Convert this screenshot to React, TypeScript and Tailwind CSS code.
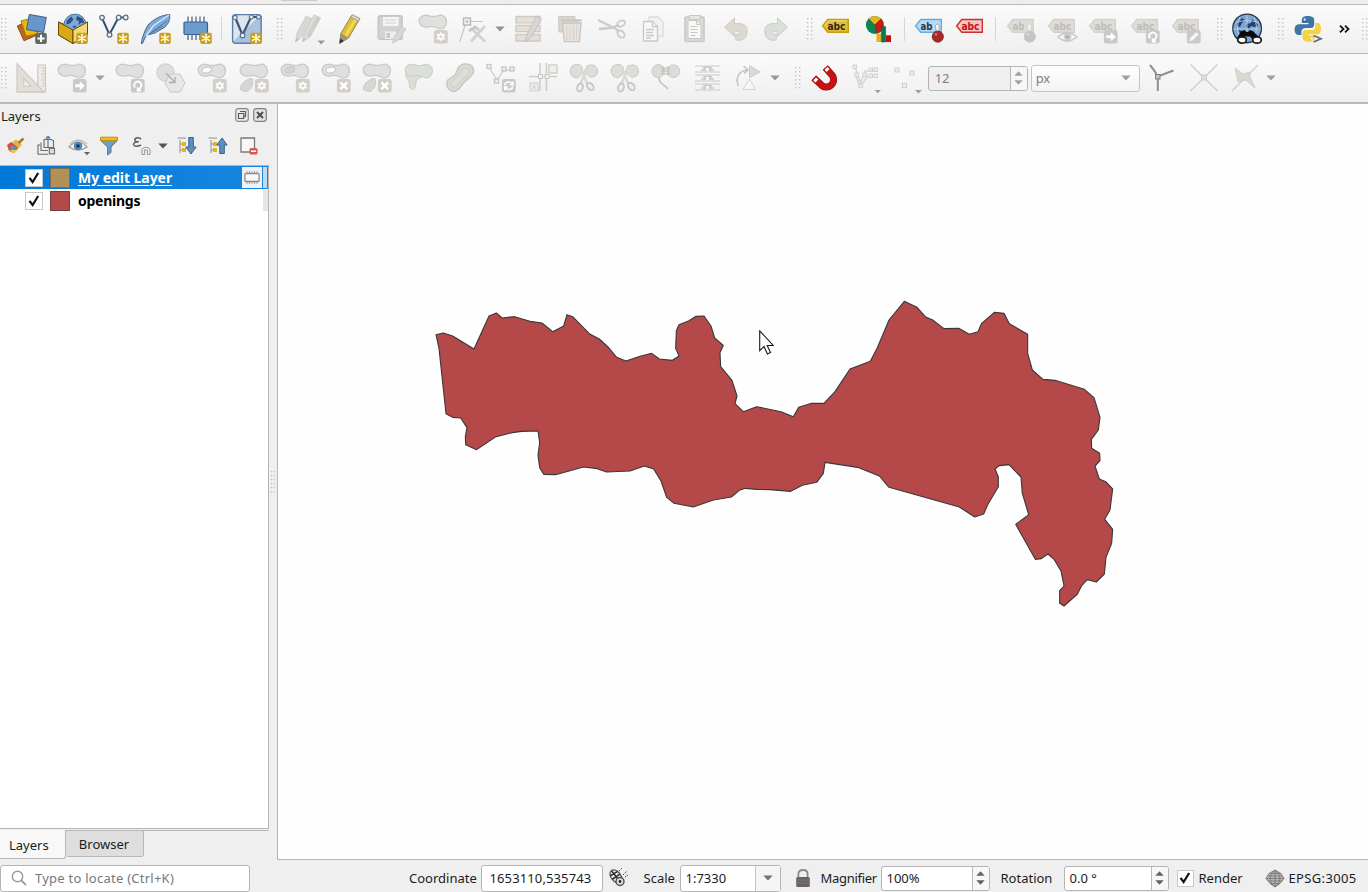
import React from "react";

type Kids = { children?: React.ReactNode };

/* ---------- toolbar primitives ---------- */

function Tool({ children }: Kids) {
  return (
    <div className="flex h-full w-[41.3px] shrink-0 items-center justify-center">
      <svg width="30" height="30" viewBox="0 0 30 30" className="overflow-visible">
        {children}
      </svg>
    </div>
  );
}

function Grip() {
  return (
    <svg width="6" height="22" viewBox="0 0 6 22" className="shrink-0">
      {[0, 1, 2, 3, 4, 5].map((i) => (
        <g key={i} fill="#c2c2c2">
          <rect x="0" y={i * 4} width="1.4" height="1.4" />
          <rect x="4" y={i * 4} width="1.4" height="1.4" />
        </g>
      ))}
    </svg>
  );
}

function Rule() {
  return <div className="h-6 w-px shrink-0 bg-[#d6d6d6]" />;
}

function Caret({ fill = "#929292" }: { fill?: string }) {
  return (
    <svg width="10" height="6" viewBox="0 0 10 6" className="shrink-0">
      <path d="M0.3 0.5H9.7L5 5.6Z" fill={fill} />
    </svg>
  );
}

function Badge({ kind, tone = "gray" }: { kind: "star" | "plus" | "arrow" | "turn" | "x" | "sync" | "pen"; tone?: "gray" | "gold" | "dark" | "warm" }) {
  const fill = { gray: "#c9c9c9", gold: "#c9a01a", dark: "#5f6b60", warm: "#d2cec8" }[tone];
  const strong = tone === "gold" || tone === "dark";
  return (
    <g transform={strong ? "translate(18.2 18.8)" : "translate(15.9 16) scale(1.19 1.21)"}>
      <rect width="11.6" height="11.2" rx="2" fill={fill} />
      {kind === "star" && strong && <path d="M5.8 1.6V9.6M2.3 3.6L9.3 7.6M9.3 3.6L2.3 7.6" stroke="#fff8dc" strokeWidth="1.6" strokeLinecap="round" />}
      {kind === "star" && !strong && (
        <>
          <path d="M5.8 1.4L7.2 3.4L9.6 3.4L8.5 5.6L9.6 7.8L7.2 7.8L5.8 9.8L4.4 7.8L2 7.8L3.1 5.6L2 3.4L4.4 3.4Z" fill="#fafafa" />
          <circle cx="5.8" cy="5.6" r="1.1" fill={fill} />
        </>
      )}
      {kind === "plus" && <path d="M5.8 2V9.2M2.2 5.6H9.4" stroke="#fff" strokeWidth="2" />}
      {kind === "arrow" && <path d="M2 4.3H5.8V1.8L10 5.6L5.8 9.4V6.9H2Z" fill="#fff" />}
      {kind === "turn" && <path d="M3.4 7A3 3 0 1 1 8.4 6.6L6.2 9.3M5.7 6.8V9.6H8.6" fill="none" stroke="#fff" strokeWidth="1.5" />}
      {kind === "x" && <path d="M3 2.8L8.6 8.4M8.6 2.8L3 8.4" stroke="#fff" strokeWidth="2.2" />}
      {kind === "sync" && <path d="M2.4 5.2C3 2 7.5 1.6 8.8 4.4M9.3 2V4.8H6.6M9.2 6.2C8.5 9.2 4.2 9.6 2.8 6.9M2.3 9.3V6.6H5" fill="none" stroke="#fff" strokeWidth="1.3" />}
      {kind === "pen" && <path d="M2 9.3L3 6.4L7.9 1.8L9.9 3.6L5 8.4Z" fill="#f6f6f6" />}
    </g>
  );
}

const BLOB = "M1.2 7.5C.6 3.5 4.8.6 9.2 1.4C13 2.4 16 3.4 19.5 1.8C24.6-.2 29 3.6 28.4 8.4C28.2 12 25.8 15.8 20.8 14.6C17.2 13.4 15.6 11.4 11.6 12.6C6.4 14.2 1.8 12.2 1.2 7.5Z";
function Blob({ hole }: { hole?: "white" | "gray" }) {
  return (
    <g stroke="#c9c9c7" strokeWidth="1.3">
      <path d={BLOB} fill="#dfe1de" />
      {hole && <ellipse cx="9.8" cy="7" rx="5" ry="3" transform="rotate(-12 9.8 7)" fill={hole === "white" ? "#fcfcfc" : "#d3d6d2"} />}
    </g>
  );
}
const Part = () => <path d="M1.5 26.5C1.5 20 7 16 13 15.5C15 21 12 27 8 28.4C5.5 28.6 3 27.6 1.5 26.5Z" fill="#d5d7d3" stroke="#c9c9c7" />;

/* ---------- data source icons ---------- */

const AddLayers = () => (
  <>
    <path d="M.3 12L11 7L20 21L7 26.8Z" fill="#bb6522" stroke="#934b14" />
    <path d="M4 7L16 4L21 20L9 22Z" fill="#ecb90e" stroke="#a3790b" />
    <path d="M12.3.5L29.3 3.5L26.5 18.5L9.5 15.5Z" fill="#6697c8" stroke="#385f8c" />
    <Badge kind="plus" tone="dark" />
  </>
);
const GeoPackage = () => (
  <>
    <path d="M.5 8L15 14L29.5 8V21L15 29.5L.5 21Z" fill="#d9aa14" stroke="#654b12" />
    <circle cx="17" cy="11.3" r="11.2" fill="#7daada" stroke="#4f76a3" />
    <path d="M8.5 7L13 2.5L15.5 5.5L12 9.5L8.5 10.5ZM19 2L24.5 4.5L26.5 9.5L23.5 8.5L20.5 11L21 7.5L18 5.5ZM14 12.5L18 11.5L17.5 14.5Z" fill="#2f5180" />
    <path d="M.5 8L15 16L15 29.5L.5 21Z" fill="#d9aa14" stroke="#654b12" />
    <path d="M15 16L29.5 8V21L15 29.5Z" fill="#f3d975" stroke="#654b12" />
    <Badge kind="star" tone="gold" />
  </>
);
const Vertices = () => (
  <>
    <path d="M3 4L10.4 20.5L19.5 3.5H27" fill="none" stroke="#37506f" strokeWidth="2" />
    <g fill="#f3f7fb" stroke="#5e6f7f" strokeWidth="1.3">
      <circle cx="3" cy="3.6" r="2.3" /><circle cx="10.5" cy="20.8" r="2.3" />
      <circle cx="19.6" cy="3.5" r="2.3" /><circle cx="26.7" cy="3.5" r="2.3" />
    </g>
    <Badge kind="star" tone="gold" />
  </>
);
const Feather = () => (
  <>
    <path d="M.3 29.5C1 24 3 18 7 11C13 5 20 1 28.8.5C29 7 27 10 24 13L14 19L6 21C4 23 3 26 1.5 29.5Z" fill="#7faad8" stroke="#416994" />
    <path d="M5 22L12 12L28 1" stroke="#d3e5f8" strokeWidth="1.5" fill="none" />
    <path d="M8 20L22 12M11 18L26 7" stroke="#416994" strokeWidth=".8" />
    <Badge kind="star" tone="gold" />
  </>
);
const MemoryChip = () => (
  <>
    <path d="M6 2.5V26M10 2.5V26M14 2.5V26M18 2.5V26M22 2.5V26" stroke="#435b7c" strokeWidth="1.2" />
    <rect x="2" y="8" width="23.5" height="12.5" rx="1.2" fill="#6c9bce" stroke="#395f93" strokeWidth="1.2" />
    <Badge kind="star" tone="gold" />
  </>
);
const VirtualLayer = () => (
  <>
    <rect x=".6" y=".6" width="28.6" height="28.6" rx="3" fill="#a9c3df" stroke="#5b7ea9" strokeWidth="1.4" />
    <path d="M1.5 1.5H28L1.5 27Z" fill="#dce6ee" />
    <path d="M3 3L10.5 21L19 3H27" fill="none" stroke="#3d5674" strokeWidth="2.2" />
    <g fill="#eef3f7" stroke="#5b7189" strokeWidth="1.2">
      <circle cx="3" cy="3.4" r="2.1" /><circle cx="10.6" cy="21.5" r="2.3" />
      <circle cx="19.4" cy="3" r="2" /><circle cx="26.6" cy="3" r="2" />
    </g>
    <Badge kind="star" tone="gold" />
  </>
);

/* ---------- digitizing icons ---------- */

const CurrentEdits = () => (
  <>
    <g stroke="#cbcbc9" strokeWidth=".8">
      <path d="M1.5 28L3 19L12 2L18 4.6L9 22Z" fill="#d6d6d3" />
      <path d="M8.5 28L10.5 19L20 .8L26.5 4L16 22.8Z" fill="#dedcd8" />
      <path d="M16 22.8L26.5 4L23.4 2.4L13 20.8Z" fill="#cfcfcc" />
    </g>
    <path d="M1.5 28L2.3 24L5 25.4ZM8.5 28L9.4 24L12 25.6Z" fill="#bdbdbb" />
    <path d="M23.5 26.5H31L27.2 30.5Z" fill="#9a9a9a" />
  </>
);
const Pencil = () => (
  <>
    <path d="M4.6 29.5L5.8 19.5L17 .9L24.8 4.6L13.5 24Z" fill="#e2bd36" stroke="#8d7a35" strokeWidth=".9" />
    <path d="M12.5 21.8L23 4L20.5 2.8L9.5 20.7Z" fill="#f3d75a" />
    <path d="M15.8 3L17 .7L24.9 4.5L23.5 7Z" fill="#dadada" stroke="#969696" strokeWidth=".8" />
    <path d="M5.8 19.5L13.5 24L4.6 29.5Z" fill="#9a948d" />
    <path d="M5.2 24.5L8.8 27L4.6 29.5Z" fill="#333" />
  </>
);
const SaveEdits = () => (
  <>
    <rect x="1.2" y="1.8" width="24" height="23.6" rx="2" fill="#d2d2d2" stroke="#c4c4c4" strokeWidth="1.4" />
    <path d="M6 3H21.5V12H6Z" fill="#f5f5f5" /><path d="M8 6H19M8 9H19" stroke="#cfcfcf" />
    <path d="M8 17.5H19V25H8Z" fill="#eee" /><path d="M9.5 19H13V24H9.5Z" fill="#c8c8c8" />
    <path d="M15.5 29.2L17 23L24.5 12.3L29 15L21.8 26Z" fill="#dad6cf" stroke="#c6c6c3" strokeWidth=".8" />
  </>
);
const AddPolygon = () => (<><Blob /><Badge kind="star" tone="warm" /></>);
const VertexTool = () => (
  <>
    <path d="M1 27.5L7 8M11 7.5H24" stroke="#c6c6c4" strokeWidth="1.2" />
    <rect x="4.5" y="4" width="7" height="7" fill="#eee" stroke="#b8b8b8" strokeWidth="1.4" /><circle cx="8" cy="7.5" r="1.3" fill="#bbb" />
    <path d="M12 14L26 27.5M26 12L12 27.5" stroke="#d3d2ce" strokeWidth="2.8" /><path d="M10 17L16 13L20 16" stroke="#c9c9c7" strokeWidth="2.8" fill="none" />
  </>
);
const MultiEdit = () => (
  <>
    <g fill="#e6dfd4" stroke="#cdc9c3" strokeWidth="1.3"><path d="M2 2.5H26V8.8H2ZM2 11.5H26V17.6H2ZM2 20.5H26V27H2Z" /></g>
    <path d="M11 28L13 20L22.5 2L27.5 4.8L17.5 23Z" fill="#d5d6d3" stroke="#bebfbc" strokeWidth=".9" />
  </>
);
const Trash = () => (
  <>
    <path d="M2.5 2.5H19V6H22V18H3Z" fill="#d9d5cf" stroke="#cbcac7" />
    <path d="M6.5 9H25L23.4 27.6H8.3Z" fill="#e6e3de" stroke="#c9c7c3" strokeWidth="1.4" />
    <path d="M10.5 11L11.3 26M14 11V26M17.5 11V26M21 11L20.4 26" stroke="#e0cec9" /><path d="M5 6.3H26" stroke="#c8c7c4" strokeWidth="2" />
  </>
);
const Scissors = () => (
  <g fill="none" stroke="#cccbc8">
    <path d="M1 6L19 15L22 18M2 15L14 14L22 11" strokeWidth="2.3" />
    <ellipse cx="24" cy="9.6" rx="4.2" ry="2.8" transform="rotate(-30 24 9.6)" strokeWidth="1.8" /><ellipse cx="24" cy="20" rx="4.1" ry="2.9" transform="rotate(45 24 20)" strokeWidth="1.8" />
  </g>
);
const Copy = () => (
  <g fill="#f7f7f7" stroke="#c9c9c9" strokeWidth="1.3">
    <path d="M11 3H20L25 8V22H11Z" fill="#f2f2f2" stroke="#dbdbdb" /><path d="M5.5 7.5H14.5L19.5 12.5V27H5.5Z" /><path d="M14.5 8V12.5H19M8 15.5H16M8 18.5H15M8 21.5H16M8 24H13" />
  </g>
);
const Paste = () => (
  <g stroke="#c8c8c6">
    <rect x="5" y="3" width="19" height="24.5" rx="1" fill="#dcdad5" strokeWidth="1.6" />
    <path d="M8 6.5H16.5L21 10.5V24.5H8Z" fill="#f8f8f8" /><path d="M10.5 12.5H17.5M10.5 15.5H17.5M10.5 18.5H17.5M10.5 21.5H15.5M16.5 7V10.5H20.5" fill="none" />
    <rect x="9.5" y="1.5" width="11" height="4" fill="#e5e5e2" />
  </g>
);
const ARROW = "M3.5 13.2L13.5 4V9.5H17.5C24 9.5 27 13 26 19C25 25 21 27 14.8 26V20C18.5 21 20.2 18 17 17.2H13.5V22.5Z";
const Undo = () => <path d={ARROW} fill="#ddd9d0" stroke="#cecbc4" />;
const Redo = () => <g transform="matrix(-1 0 0 1 29 0)"><path d={ARROW} fill="#dbdfda" stroke="#c9ccc8" /></g>;

/* ---------- label icons ---------- */

function Tag({ fill, stroke, ink, text = "abc", light }: { fill: string; stroke: string; ink: string; text?: string; light?: boolean }) {
  return (
    <>
      <path d="M1.6 12L6.8 5.5H27.3V18.2H6.8Z" fill={fill} stroke={stroke} strokeWidth="1.4" />
      {light && <path d="M3.5 12L7.5 6.8H26" fill="none" stroke="#f6de7c" />}
      <text x="6.4" y="15.6" fontSize="10.5" fontWeight="700" fill={ink} className="font-['DejaVu_Sans',sans-serif]" textLength={text === "abc" ? 18 : 12} lengthAdjust="spacingAndGlyphs">{text}</text>
    </>
  );
}
const Diagram = () => (
  <g transform="translate(1 0)">
    <circle cx="10.8" cy="11" r="8.9" fill="#098457" /><path d="M10.8 11L4.3 4.8A9 9 0 0 1 17.3 4.8Z" fill="#e4b51f" /><path d="M10.8 11L17.3 4.8A9 9 0 0 1 13 19.6Z" fill="#cb1818" />
    <path d="M10.8 11L4.5 4.8M10.8 11L17.3 4.8M10.8 11L13 19.6" stroke="#454533" strokeWidth=".7" />
    <path d="M12.4 19.5H17V28H12.4Z" fill="#e7b520" /><path d="M17.4 12.6H21.6V28H17.4Z" fill="#09774f" stroke="#0b5c3e" strokeWidth=".6" /><path d="M22 21.3H27V28H22Z" fill="#bd1111" />
  </g>
);
function Pin({ muted }: { muted?: boolean }) {
  return <><path d="M22.3 18L21.3 12C22 9.5 24.7 9.5 25.3 12L24.8 18" fill="#f4f4f4" stroke={muted ? "#ccc" : "#8b9aa8"} strokeWidth=".8" /><circle cx="23.8" cy="22.6" r="5.6" fill={muted ? "#c5c4c3" : "#a92828"} stroke={muted ? "#c2c1c0" : "#7f1b1b"} strokeWidth=".8" /><circle cx="22" cy="20.4" r="1.4" fill={muted ? "#d8d8d8" : "#d26d6d"} /></>;
}
const MutedTag = ({ text }: { text?: string }) => <Tag fill="#dfdcd6" stroke="#d4d2cd" ink="#bcbcb9" text={text} />;
const Eye = () => <><path d="M11 23Q20 14.5 30 23Q20 31 11 23Z" fill="#f4f4f4" stroke="#c6c6c6" strokeWidth="1.4" /><circle cx="20.5" cy="22.8" r="3.7" fill="#c9c9c9" /><circle cx="20.5" cy="22.8" r="1.5" fill="#aaa" /></>;

const GlobeSearch = () => (
  <>
    <circle cx="15.1" cy="14.4" r="14.3" fill="#7da6d4" stroke="#24374f" strokeWidth="1.4" />
    <path d="M5 9L10 4L13 6L10 9L8 13L5 12ZM15 10L19 9L20 5L25 9L26 12L22 13L19 12L17 15L14 13ZM6 16L11 17L9 21Z" fill="#23446e" />
    <path d="M3 9Q15 4 27 9M1 15H29M15 1V18M8 3Q3 14 8 24M22 3Q27 14 22 24" stroke="#b5cfea" strokeWidth=".9" fill="none" />
    <path d="M9 17.5L12.5 16L14.5 18H16L18 16L21.5 17.5L28.8 25L22 27L18 22.5H13L9 27L5 24Z" fill="#090909" />
    <ellipse cx="10" cy="26" rx="4.3" ry="3.2" fill="#fff" stroke="#171717" strokeWidth="1.7" /><ellipse cx="25" cy="26" rx="4.3" ry="3.2" fill="#fff" stroke="#171717" strokeWidth="1.7" />
  </>
);
const Python = () => (
  <>
    <path d="M14.6 2C9.5 2 8.8 4.2 8.8 6.6V9H15.5V10.2H5.7C2.7 10.2 1.6 13.2 1.6 15.5C1.6 18.8 3 21 6 21H8.4V18C8.4 15.3 10.2 14 12.8 14H18C20.5 14 21.2 12 21.2 10V6C21.2 3 18.4 2 14.6 2Z" fill="#3d75a6" />
    <path d="M22.3 8.9V12.4C22.3 15 20.4 16 17.7 16H13C10.5 16 9.5 17.4 9.5 19.4V23.5C9.5 26.3 12 27.7 15.6 27.7C19 27.7 21.5 26.3 21.5 23.5V21.5H15.5V20.2H24.7C27.2 20.2 28 17.5 28 14.5C28 11.6 27.2 8.9 24.7 8.9Z" fill="#f4d246" />
    <circle cx="11.7" cy="5.5" r="1.1" fill="#fff" /><circle cx="18.7" cy="24.5" r="1" fill="#fff" /><path d="M20.5 21.5L28 24.8L20.5 28" fill="none" stroke="#666" strokeWidth="1.7" />
  </>
);

/* ---------- advanced digitizing icons ---------- */

const Ruler = () => (
  <g stroke="#ccc8c2" strokeWidth="1.2">
    <path d="M21.8 2H29.5V29H21.8Z" fill="#eeeae5" /><path d="M25 5H29M26 8H29M25 11H29M26 14H29M25 17H29M26 20H29M25 23H29" />
    <path d="M1 .7L28 29.2H1ZM7.8 15.5V23H15Z" fill="#e1ded8" fillRule="evenodd" />
  </g>
);
const Simplify = () => (<><circle cx="9.5" cy="9.5" r="8.7" fill="#dedfdc" stroke="#ccc" /><path d="M14 11H24L29 20L24 29H14L9 20Z" fill="#e4e8e8" stroke="#c7caca" /><path d="M10 10L18.5 19M19 14V19.5H13" stroke="#aeb0ad" fill="none" strokeWidth="1.3" /></>);
const Reshape = () => (<><path d="M2 8V14L5 18L5.6 24Q8.6 29 11.2 24L12.4 17L18 13.5Z" fill="#e0dbd4" stroke="#cfccc7" /><path d={BLOB} fill="#dadfd9" stroke="#c8cbc7" /></>);
const Offset = () => (<><path d="M2 20C2 14 7 16 10 12C13 8 12 2 19 1C26 .3 29 4 28.5 9C27 14 21 16 17 22C13 28 9 30 5 27Q1 24 2 20Z" fill="#ded9d2" stroke="#cbc8c4" strokeWidth="1.5" /><path d="M6 20C7 16 11 16 14 12C16 8 16 5 20 5Q26 5 24.5 10C22 14 18 15 15 19Q11 26 8 25Q5 23 6 20Z" fill="#dbdfda" stroke="#cdcecb" /></>);
const RotatePoint = () => (<><path d="M3 4L11 17L18 7H26" stroke="#c9c9c9" strokeWidth="1.2" fill="none" /><g fill="#efefef" stroke="#c5c5c5" strokeWidth="1.3"><rect x="1" y="1.5" width="4" height="4" /><rect x="8.5" y="16" width="4" height="4" /><rect x="16" y="4" width="4" height="4" /><rect x="24" y="4" width="4" height="4" /></g><Badge kind="sync" /></>);
const Trim = () => (<><path d="M12 0V28M18.5 0V28M1 13.5H29" stroke="#cecece" strokeWidth="1.6" /><path d="M16 0V28" stroke="#eee" /><g fill="#f1f1f1" stroke="#c8c8c8"><rect x="10.5" y="11.5" width="4" height="4" /><rect x="17" y="11.5" width="4" height="4" /></g><rect x="21" y="2" width="8" height="8" fill="#eee" stroke="#d7d0c4" strokeWidth="1.5" /><rect x="2" y="20" width="8" height="8" fill="#eee" stroke="#ccc" /><path d="M4 22L8 26M8 22L4 26" stroke="#ccc" /></>);
const SplitShape = () => (<><path d="M1 9Q1 1 9 1.5Q15 2 13 9Q11 15 7 15Q2 14 1 9ZM19 2.5Q28 0 28.5 8Q28 15 21 14L15 9Z" fill="#dbdfda" stroke="#c7cac6" /><path d="M12 5L19 23M19 2L11 22" stroke="#d9d9d8" strokeWidth="2.6" /><g fill="#eee" stroke="#c6c6c4" strokeWidth="1.8"><ellipse cx="11" cy="24.5" rx="2.8" ry="4.1" transform="rotate(20 11 24.5)" /><ellipse cx="21.3" cy="23.5" rx="2.8" ry="4.2" transform="rotate(-40 21.3 23.5)" /></g></>);
const MergeShape = () => (<><path d="M1 8Q2 1 9 1.5L14 6L13 11L9 14.5Q1 15 1 8ZM16 6L20 2Q29 1 28.5 8.5Q28 15 21 14.5L16 11Z" fill="#d9ddd8" stroke="#c8cbc7" /><path d="M10 5H19M10 8H19M10 11H19M12 3V12M17 3V12" stroke="#bebfbe" /><path d="M8 15C8 21 12 20 17 26" fill="none" stroke="#c4c4c3" strokeWidth="1.6" /></>);
const Stitch = () => (<g stroke="#c9cbc8" fill="none"><path d="M2 3H27M2 9H27M2 12H27M2 18H27M2 21H27M2 27H27" strokeWidth="1.1" />{[3, 12, 21].map((y) => <path key={y} d={`M8 ${y + 4}H13M16 ${y + 4}H21M10 ${y + 2}Q15 ${y} 19 ${y + 2}M12 ${y + 1}V${y + 5}M17 ${y + 1}V${y + 5}`} strokeWidth="1.4" />)}</g>);
const RotateSymbol = () => (<g><path d="M4.5 23C.5 14 6 7.5 13.5 7M9.5 3L14 7L10 10.5" fill="none" stroke="#c4c4c4" strokeWidth="1.6" /><path d="M15.5 2.5L26 9L15.5 14.5Z" fill="#d8dcd8" stroke="#c9cbc9" /><path d="M15.5 16L21.5 26.5H9Z" fill="#f6f6f6" stroke="#d4d4d4" /></g>);
const Magnet = () => (
  <g fill="none">
    <path d="M3.7 14.9L10.8 21.4A7.2 7.2 0 0 0 21.9 12L15.3 4.5" stroke="#a80f0f" strokeWidth="7" />
    <path d="M4.1 15.3L11 21.6A7 7 0 0 0 21.7 12L15.6 4.9" stroke="#c41313" strokeWidth="5.6" />
    <path d="M4.7 15.9L6.9 17.9M16.1 5.4L18 7.6" stroke="#fff" strokeWidth="4" />
  </g>
);
const SnapMode = () => (<><path d="M3 4L8.5 20L13 8H24M3 11L8 24L15 14H24" stroke="#d5d6d4" strokeWidth="1.5" fill="none" /><g fill="#ececec" stroke="#d2d2d2">{[[1, 2], [7, 21], [11, 10], [17, 5], [22, 5], [17, 11], [22, 11], [3, 10]].map(([x, y]) => <rect key={`${x}-${y}`} x={x} y={y} width="3.5" height="3.5" />)}</g><path d="M22.5 27H29L25.8 30.3Z" fill="#a0a0a0" /></>);
const SnapType = () => (<><g fill="#eee" stroke="#cdcdcd"><rect x="2" y="5" width="4" height="4" /><rect x="17" y="8" width="4" height="4" /><rect x="9.5" y="20.5" width="4" height="4" /></g><path d="M22 27H29L25.5 30.5Z" fill="#9e9e9e" /></>);
const Topology = () => (<g><path d="M3 2Q8 8 10.8 13.5L26.5 7.5M10.8 14V28" fill="none" stroke="#8d938b" strokeWidth="2" /><rect x="8.5" y="11.5" width="4.5" height="4.5" fill="#c0c4bf" stroke="#7d857b" /></g>);
const Intersect = () => (<g><path d="M1.5 1.5L28.5 28M28.5 1.5L1.5 28" stroke="#d2d2d1" strokeWidth="1.7" /><rect x="12.5" y="12" width="5" height="5" fill="#ddd" stroke="#ccc" /></g>);
const SelfSnap = () => (<><path d="M2 28L28 2" stroke="#d2d2cf" strokeWidth="1.5" /><path d="M5 5L13 11L20 9V14L25 25L16 17L8 19Z" fill="#dbd8d0" stroke="#d0cfcb" /></>);

/* ---------- form pieces ---------- */

function Spinner({ ink = "#685f5f" }: { ink?: string }) {
  return (
    <div className="flex h-full w-[17px] shrink-0 flex-col items-center justify-center gap-[4px] rounded-r-[2px] border-l border-[#b9b9b9] bg-[#f7f7f7]">
      <svg width="9" height="5" viewBox="0 0 9 5"><path d="M.3 4.7H8.7L4.5.3Z" fill={ink} /></svg>
      <svg width="9" height="5" viewBox="0 0 9 5"><path d="M.3.3H8.7L4.5 4.7Z" fill={ink} /></svg>
    </div>
  );
}

function Check({ small }: { small?: boolean }) {
  return (
    <div className={small ? "flex size-[17px] shrink-0 items-center justify-center border border-[#c8c8c8] bg-white" : "flex size-[18px] shrink-0 items-center justify-center border border-[#c8c8c8] bg-white"}>
      <svg width="12" height="12" viewBox="0 0 12 12"><path d="M1.5 5.8L4.6 10L10.2 1" fill="none" stroke="#111" strokeWidth="2.2" /></svg>
    </div>
  );
}

/* ---------- page regions ---------- */

function TopToolbar() {
  return (
    <div className="flex h-[50px] shrink-0 items-center border-t border-b border-[#b8b8b8] bg-gradient-to-b from-[#fbfbfb] to-[#efefef]">
      <div className="flex w-[11px] shrink-0 pl-px"><Grip /></div>
      <Tool><AddLayers /></Tool><Tool><GeoPackage /></Tool><Tool><Vertices /></Tool><Tool><Feather /></Tool><Tool><MemoryChip /></Tool>
      <div className="flex w-[8.5px] shrink-0 justify-center"><Rule /></div>
      <Tool><VirtualLayer /></Tool>
      <div className="flex w-[21px] shrink-0 pl-[10px]"><Grip /></div>
      <Tool><CurrentEdits /></Tool><Tool><Pencil /></Tool><Tool><SaveEdits /></Tool><Tool><AddPolygon /></Tool><Tool><VertexTool /></Tool>
      <div className="flex w-[14px] shrink-0"><Caret /></div>
      <Tool><MultiEdit /></Tool><Tool><Trash /></Tool><Tool><Scissors /></Tool><Tool><Copy /></Tool><Tool><Paste /></Tool><Tool><Undo /></Tool><Tool><Redo /></Tool>
      <div className="flex w-[18px] shrink-0 pl-[9px]"><Grip /></div>
      <Tool><Tag fill="#e4bd2e" stroke="#c49b14" ink="#2b2a28" light /></Tool><Tool><Diagram /></Tool>
      <div className="flex w-[10px] shrink-0 justify-end pr-[3px]"><Rule /></div>
      <Tool><Tag fill="#b7dcf8" stroke="#68aadf" ink="#273642" text="ab" /><Pin /></Tool><Tool><Tag fill="#f6c5c5" stroke="#ce3030" ink="#c61111" /></Tool>
      <div className="flex w-[9px] shrink-0 justify-center"><Rule /></div>
      <Tool><MutedTag text="ab" /><Pin muted /></Tool><Tool><MutedTag /><Eye /></Tool>
      <Tool><MutedTag /><Badge kind="arrow" /></Tool><Tool><MutedTag /><Badge kind="turn" /></Tool><Tool><MutedTag /><Badge kind="pen" /></Tool>
      <div className="flex w-[20px] shrink-0 pl-[10px]"><Grip /></div>
      <Tool><GlobeSearch /></Tool>
      <div className="flex w-[20px] shrink-0 pl-[10px]"><Grip /></div>
      <Tool><Python /></Tool>
      <svg width="11" height="8" viewBox="0 0 11 8" className="ml-[10px] shrink-0"><path d="M1 .7L4.5 4L1 7.3M6 .7L9.5 4L6 7.3" fill="none" stroke="#151515" strokeWidth="1.8" /></svg>
      <div className="ml-[12px] shrink-0"><Grip /></div>
    </div>
  );
}

function DigitizingToolbar() {
  return (
    <div className="flex h-[48px] shrink-0 items-center bg-gradient-to-b from-[#fbfbfb] to-[#efefef]">
      <div className="flex w-[10.4px] shrink-0 pl-px"><Grip /></div>
      <Tool><Ruler /></Tool><Tool><Blob /><Badge kind="arrow" /></Tool>
      <div className="flex w-[16px] shrink-0 pl-[2px]"><Caret fill="#a1a1a1" /></div>
      <Tool><Blob /><Badge kind="turn" /></Tool><Tool><Simplify /></Tool>
      <Tool><Blob hole="white" /><Badge kind="star" tone="warm" /></Tool>
      <Tool><Blob /><Part /><Badge kind="star" tone="warm" /></Tool>
      <Tool><Blob hole="gray" /><Badge kind="star" tone="warm" /></Tool>
      <Tool><Blob hole="white" /><Badge kind="x" tone="warm" /></Tool>
      <Tool><Blob /><Part /><Badge kind="x" tone="warm" /></Tool>
      <Tool><Reshape /></Tool><Tool><Offset /></Tool><Tool><RotatePoint /></Tool><Tool><Trim /></Tool>
      <Tool><SplitShape /></Tool><Tool><SplitShape /></Tool><Tool><MergeShape /></Tool><Tool><Stitch /></Tool><Tool><RotateSymbol /></Tool>
      <div className="flex w-[35px] shrink-0 items-center justify-between pr-[4px]"><Caret fill="#999" /><Grip /></div>
      <Tool><Magnet /></Tool><Tool><SnapMode /></Tool><Tool><SnapType /></Tool>
      <div className="ml-[-1px] flex h-[25px] w-[100px] shrink-0 items-center rounded-[3px] border border-[#b4b4b4] bg-[#efefef] text-[#7d7d7d]">
        <span className="flex-1 pl-[6px] pt-px">12</span><Spinner ink="#a2a2a2" />
      </div>
      <div className="ml-[3px] flex h-[27px] w-[109px] shrink-0 items-center justify-between rounded-[3px] border border-[#c5c5c5] bg-gradient-to-b from-white to-[#f3f3f3] pl-[4px] pr-[8px] text-[#7d7d7d]">
        <span className="pt-px">px</span><Caret fill="#a0a0a0" />
      </div>
      <div className="ml-[2px] flex h-full shrink-0 items-center"><Tool><Topology /></Tool><Tool><Intersect /></Tool><Tool><SelfSnap /></Tool></div>
      <div className="shrink-0"><Caret fill="#a0a0a0" /></div>
    </div>
  );
}

function LayerTools() {
  return (
    <div className="flex h-[39px] shrink-0 items-center pl-[6px]">
      <svg width="20" height="20" viewBox="0 0 20 20"><path d="M1 9L5 6L13 11L8 17L3 15Z" fill="#d94d3f" /><path d="M4 11L7 9L11 13L6 15Z" fill="#5792c8" /><path d="M6 6L10 3.5L16 8.5L12.5 12.5Z" fill="#e1b543" /><path d="M12.5 7L17.5 2.5" stroke="#a57a2d" strokeWidth="2.5" /><path d="M3 14H12L8 17Z" fill="#ebc84b" /></svg>
      <svg width="20" height="20" viewBox="0 0 20 20" className="ml-[11px]"><g fill="none" stroke="#676d69" strokeWidth="1.1"><path d="M3 9H1V18.3H11M4 6.5V14.5H11" /><path d="M7 3.5V11.5H16.5V4.5L14 3.5Z" fill="#eceeee" /><rect x="12.3" y="12.3" width="5.2" height="5.6" fill="#ddd" /></g><path d="M11 0V11M9 2.5L11 0L13 2.5" fill="none" stroke="#6180a2" strokeWidth="1.3" /></svg>
      <svg width="24" height="20" viewBox="0 0 24 20" className="ml-[11px]"><path d="M1 11Q10 1 19 11Q10 17 1 11Z" fill="#f7f7f7" stroke="#9c9690" strokeWidth="1.2" /><path d="M2 8Q10 0 19 8" fill="none" stroke="#aaa59d" /><circle cx="10" cy="10" r="4.3" fill="#4f86bb" /><circle cx="10" cy="10" r="1.8" fill="#1d3654" /><path d="M16 16H22L19 19.3Z" fill="#66605e" /></svg>
      <svg width="20" height="20" viewBox="0 0 20 20" className="ml-[7px]"><path d="M1.7 4.5H18.3L12 11V16.5L8.6 19V11Z" fill="#719bc8" stroke="#4c79a9" /><path d="M1.5 1.2H18.5V4.5H1.5Z" fill="#e9bd1a" stroke="#c1940d" /></svg>
      <svg width="20" height="20" viewBox="0 0 20 20" className="ml-[13px]"><path d="M9 3.4C8 1.2 2.8 1 2.8 3.9Q2.8 5.8 6.8 5.8Q1.2 6 1.6 8.7Q3 11.8 9 9" fill="none" stroke="#5e5e5e" strokeWidth="1.5" /><path d="M10 18.5V13.2Q14 9.2 18 13.2V18.5H15.4V14H12.6V18.5Z" fill="#eee" stroke="#999" /></svg>
      <div className="ml-[6px]"><Caret fill="#575454" /></div>
      {[false, true].map((up) => (
        <svg key={String(up)} width="20" height="20" viewBox="0 0 20 20" className={up ? "ml-[11px]" : "ml-[9px]"}>
          <path d="M.5 2H9M3 4V17M3 8H8M3 14H8" stroke="#8e8e8e" fill="none" /><path d="M5 6H9V10H5ZM5 12H9V16H5Z" fill="#e3b51e" />
          <path d={up ? "M8.8 9L14 2L19.2 9H16.3V17.5H11.8V9Z" : "M8.8 11L14 18L19.2 11H16.3V1.5H11.8V11Z"} fill="#5f8fc2" stroke="#365f8e" />
        </svg>
      ))}
      <svg width="20" height="20" viewBox="0 0 20 20" className="ml-[11px]"><path d="M2 2H15.5V16H2Z" fill="#f7f7f7" stroke="#7a7a7a" strokeWidth="1.3" /><rect x="10.5" y="12" width="8" height="6.5" rx="1.5" fill="#d95757" /><path d="M12 15.2H17" stroke="#fff" strokeWidth="1.6" /></svg>
    </div>
  );
}

function LayersPanel() {
  return (
    <aside className="flex w-[269px] shrink-0 flex-col bg-[#efefef]">
      <div className="flex h-[22px] shrink-0 items-center justify-between pl-[1px] pr-[2px]">
        <span className="pt-[2px]">Layers</span>
        <div className="flex gap-[4px]">
          <svg width="14" height="14" viewBox="0 0 14 14"><rect x=".7" y=".7" width="12.6" height="12.6" rx="2.5" fill="#e8e8e8" stroke="#8a8a8a" strokeWidth="1.2" /><path d="M5 3.5H10.5V8.5H8.7M3.5 5.5H8.7V10.5H3.5Z" fill="none" stroke="#5b5b5b" strokeWidth="1.2" /></svg>
          <svg width="14" height="14" viewBox="0 0 14 14"><rect x=".7" y=".7" width="12.6" height="12.6" rx="2.5" fill="#e2e2e2" stroke="#808080" strokeWidth="1.2" /><path d="M4 4L10 10M10 4L4 10" stroke="#505050" strokeWidth="2" /></svg>
        </div>
      </div>
      <LayerTools />
      <div className="flex min-h-0 flex-1 flex-col border-t border-r border-b border-[#b5b5b5] bg-white font-['Noto_Sans',sans-serif] text-[14px] font-bold">
        <div className="flex h-[23px] shrink-0 items-center bg-gradient-to-r from-[#0078d7] to-[#1686e0] pl-[25px] text-white">
          <Check />
          <div className="ml-[7px] size-5 border border-[#806b47] bg-[#b19158]" />
          <span className="ml-[8px] tracking-[-0.05px] underline underline-offset-2">My edit Layer</span>
          <div className="ml-auto flex h-[21px] w-5 items-center justify-center bg-[#f0f1f2]">
            <svg width="18" height="15" viewBox="0 0 18 15"><path d="M4 1V14M6.5 1V14M9 1V14M11.5 1V14M14 1V14" stroke="#a5a5a5" /><rect x="1.9" y="3.5" width="14.2" height="8" rx="1" fill="#f8f8f8" stroke="#8a8a8a" strokeWidth="1.3" /></svg>
          </div>
          <div className="ml-[1px] mr-[1px] h-[21px] w-[4px] bg-[#bddbf4]" />
        </div>
        <div className="flex h-[23px] shrink-0 items-center pl-[25px] text-black">
          <Check /><div className="ml-[7px] size-5 border border-[#704142] bg-[#b54849]" /><span className="ml-[8px] tracking-[-0.25px]">openings</span><div className="ml-auto h-[21px] w-[5px] bg-[#e5e5e5]" />
        </div>
      </div>
      <div className="flex h-[31px] shrink-0 items-start pt-px">
        <div className="flex h-[29px] w-[66px] items-center rounded-br-[3px] border-r border-b border-[#b7b7b7] bg-[#f8f8f8] pl-[9px] pt-[2px]">Layers</div>
        <div className="flex h-[27px] w-[78px] items-center justify-center rounded-b-[3px] border border-l-0 border-[#b7b7b7] bg-[#dedede] pr-[1px] pt-px">Browser</div>
        <div className="h-px flex-1 bg-[#b7b7b7]" />
      </div>
    </aside>
  );
}

const OUTLINE =
  "48,134 70,129 98,138 162,177 207,78 229,69 246,84 284,80 330,94 366,99 398,125 431,108 441,74 458,80 508,131 538,147 567,174 590,202 618,213 660,199 695,190 718,207 757,211 777,198 767,175 769,122 777,104 807,92 828,79 852,78 873,108 884,144 910,166 900,188 902,230 936,271 951,318 945,341 970,365 1010,350 1083,365 1120,380 1136,352 1175,340 1212,340 1245,305 1290,237 1351,214 1372,173 1407,90 1453,34 1491,52 1516,80 1538,90 1572,116 1616,115 1648,133 1674,125 1685,100 1723,67 1752,70 1768,101 1823,133 1823,190 1837,240 1869,268 1905,271 1993,298 2022,323 2040,382 2035,420 2014,448 2015,475 2039,490 2040,512 2025,528 2038,567 2057,575 2078,597 2070,660 2054,688 2078,718 2075,760 2058,802 2053,852 2029,876 2002,869 1985,887 1971,914 1932,948 1919,940 1919,902 1932,888 1923,843 1902,808 1884,792 1864,806 1846,808 1787,703 1826,674 1807,610 1803,561 1767,524 1738,527 1725,537 1735,560 1735,590 1703,644 1691,672 1664,681 1618,651 1407,592 1378,558 1313,532 1215,517 1210,550 1190,577 1147,586 1112,604 1050,599 1010,598 976,595 958,601 934,621 880,630 820,651 762,640 740,622 723,573 701,537 673,528 630,543 560,546 527,535 490,531 407,554 371,553 359,533 354,495 359,458 354,423 305,424 277,428 228,440 170,479 137,464 136,440 141,413 122,384 98,382 78,371 57,175";

function MapCanvas() {
  return (
    <main className="relative min-w-0 flex-1 border-l border-b border-[#b5b5b5] bg-[#fefefe] pl-[142px] pt-[186px]">
      <svg width="710" height="330" viewBox="0 0 2130 990"><polygon points={OUTLINE} fill="#b54849" stroke="#383838" strokeWidth="3.3" strokeLinejoin="round" /></svg>
      <svg width="16" height="25" viewBox="0 0 16 25" className="absolute left-[481px] top-[226px]"><path d="M.7 .8V20.7L5 16.5L8.4 24L11.5 22.6L8.2 15.5H14.2Z" fill="white" stroke="#17172a" strokeWidth="1.1" /></svg>
    </main>
  );
}

function StatusBar() {
  return (
    <footer className="flex h-[32px] shrink-0 items-center bg-[#efefef] pt-[4px]">
      <div className="flex h-[27px] w-[250px] shrink-0 items-center rounded-[3px] border border-[#b5b5b5] bg-white pl-[10px] text-[#787878]">
        <svg width="17" height="17" viewBox="0 0 17 17"><circle cx="6.5" cy="6.5" r="5.2" fill="none" stroke="#9a9a9a" strokeWidth="1.4" /><path d="M10.3 10.3L15 15" stroke="#9a9a9a" strokeWidth="1.8" /></svg>
        <span className="ml-[7px] pt-px tracking-[0.25px]">Type to locate (Ctrl+K)</span>
      </div>
      <span className="ml-[159px] w-[71.5px] shrink-0 pt-px">Coordinate</span>
      <div className="flex h-[27px] w-[122px] shrink-0 items-center rounded-[3px] border border-[#b5b5b5] bg-white pl-[8px] pt-px tracking-[0.12px]">1653110,535743</div>
      <svg width="22" height="22" viewBox="0 0 22 22" className="ml-[4px] shrink-0"><g transform="rotate(-38 10 10)"><ellipse cx="9.5" cy="9" rx="4.8" ry="7.5" fill="#eee" stroke="#4e4946" strokeWidth="1.2" /><path d="M5 5L14 6M5 9L14 9.5M9.5 2V13" stroke="#393432" strokeWidth="1.7" /></g><circle cx="13" cy="14.5" r="4" fill="#ddd" stroke="#514b49" strokeWidth="1.4" /><circle cx="13" cy="14.5" r="1.4" fill="#292929" /><path d="M12 4L15 1M16 8L20 4M18 10L21 8" stroke="#494542" strokeDasharray="1.5 1" /></svg>
      <span className="ml-[15px] w-[36px] shrink-0 pt-px">Scale</span>
      <div className="flex h-[27px] w-[101px] shrink-0 items-center rounded-[3px] border border-[#b5b5b5] bg-white pl-[5px]"><span className="flex-1 pt-px">1:7330</span><div className="flex h-full w-[25px] items-center justify-center border-l border-[#c4c4c4] bg-[#f5f5f5]"><Caret fill="#777070" /></div></div>
      <svg width="16" height="21" viewBox="0 0 16 21" className="ml-[14px] shrink-0"><path d="M3.4 10V5.8Q3.4 2 8 2Q12.6 2 12.6 5.8V10" fill="none" stroke="#8d8887" strokeWidth="1.8" /><rect x="1.2" y="9" width="13.6" height="10" rx="1.5" fill="#696260" /><path d="M2 12H14M2 15H14" stroke="#7d7775" /></svg>
      <span className="ml-[10px] w-[60px] shrink-0 pt-px tracking-[-0.3px]">Magnifier</span>
      <div className="flex h-[25px] w-[109px] shrink-0 items-center rounded-[3px] border border-[#b5b5b5] bg-white pl-[5px]"><span className="flex-1 pt-px">100%</span><Spinner /></div>
      <span className="ml-[11px] w-[63px] shrink-0 pt-px">Rotation</span>
      <div className="flex h-[25px] w-[105px] shrink-0 items-center rounded-[3px] border border-[#b5b5b5] bg-white pl-[5px]"><span className="flex-1 pt-px">0.0 °</span><Spinner /></div>
      <div className="ml-[8px]"><Check small /></div>
      <span className="ml-[5px] w-[60px] shrink-0 pt-px">Render</span>
      <svg width="20" height="19" viewBox="0 0 20 19" className="ml-[6px] shrink-0"><path d="M10 1L16 4.5L19 9.5L15 14.5L10 18L5 14.5L1 9.5L4 4.5Z" fill="#bdb9b7" /><g fill="none" stroke="#7b7775" strokeWidth=".9"><path d="M1 9.5L4 4.5L10 1L16 4.5L19 9.5L15 14.5L10 18L5 14.5Z M1 9.5H19M4 4.5H16M5 14.5H15M2.5 7H17.5M3 12H17M10 1V18M10 1Q0 10 10 18M10 1Q20 10 10 18" /></g></svg>
      <span className="ml-[4px] shrink-0 pt-px tracking-[0.35px]">EPSG:3005</span>
    </footer>
  );
}

export default function App() {
  return (
    <div className="flex h-[892px] w-[1368px] flex-col overflow-hidden bg-[#efefef] font-['Noto_Sans',sans-serif] text-[13px] leading-none text-[#1c1c1c] whitespace-nowrap">
      <div className="flex h-[4px] shrink-0 bg-[#ededed] pl-[281px]"><div className="h-px w-[36px] bg-[#ccc]" /></div>
      <TopToolbar />
      <DigitizingToolbar />
      <div className="h-[2px] shrink-0 bg-[#b9b9b9]" />
      <div className="flex min-h-0 flex-1">
        <LayersPanel />
        <div className="flex w-[8px] shrink-0 items-center justify-center">
          <svg width="4" height="22" viewBox="0 0 4 22">{[0, 4, 8, 12, 16, 20].map((y) => <path key={y} d={`M0 ${y}H1.2V${y + 1.2}H0ZM3 ${y}H4V${y + 1.2}H3Z`} fill="#bdbdbd" />)}</svg>
        </div>
        <MapCanvas />
      </div>
      <StatusBar />
    </div>
  );
}
